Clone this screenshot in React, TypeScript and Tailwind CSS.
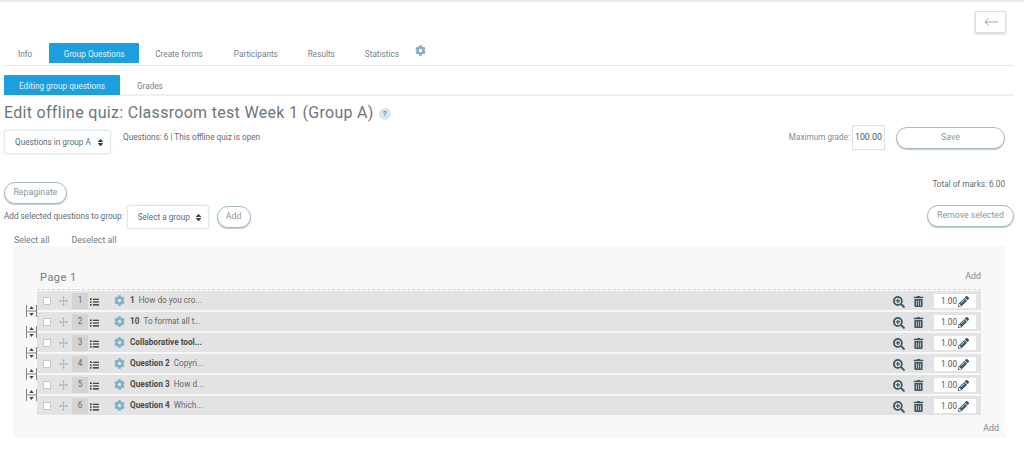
import { FaCog, FaListUl, FaPencilAlt, FaSearchPlus, FaSort, FaTrashAlt } from "react-icons/fa";

const questions = [
  { num: 1, name: "1", text: "How do you cro..." },
  { num: 2, name: "10", text: "To format all t..." },
  { num: 3, name: "Collaborative tool...", text: "" },
  { num: 4, name: "Question 2", text: "Copyri..." },
  { num: 5, name: "Question 3", text: "How d..." },
  { num: 6, name: "Question 4", text: "Which..." },
];

function MoveIcon() {
  return (
    <svg width="9" height="10" viewBox="0 0 10 10" fill="#8dbcd0" className="shrink-0" preserveAspectRatio="none">
      <path d="M4.6 1.5h.8v7h-.8zM1.5 4.6h7v.8h-7z" />
      <path d="M5 0l1.6 2H3.4zM5 10L3.4 8h3.2zM0 5l2-1.6v3.2zM10 5L8 3.4v3.2z" />
    </svg>
  );
}

function PageBreakIcon() {
  return (
    <svg width="11" height="12" viewBox="0 0 11 12" fill="none" stroke="#666" strokeWidth="0.8">
      <path d="M.5 0v12M10.5 0v12M.5 6h10" />
      <path d="M5.5 1l2.2 3H3.3zM5.5 11L3.3 8h4.4z" fill="#444" stroke="none" />
    </svg>
  );
}

function SelectBox({ label, className }: { label: string; className: string }) {
  return (
    <div className={`flex items-center justify-between rounded-[2px] border border-[#dfe8ec] bg-white text-[#5f6a72] shadow-[0_0_2px_rgba(120,150,165,0.25)] ${className}`}>
      <span>{label}</span>
      <FaSort className="h-[9px] w-[7px] text-[#3c4348]" />
    </div>
  );
}

function PillButton({ label, className }: { label: string; className: string }) {
  return (
    <button className={`rounded-full border border-[#a9bcc4] bg-white text-center text-[8.8px] text-[#8b979e] shadow-[0_1px_1px_rgba(110,140,150,0.45)] ${className}`}>
      {label}
    </button>
  );
}

function QuestionRow({ q, last }: { q: (typeof questions)[number]; last: boolean }) {
  return (
    <div className="relative flex h-[19px] items-center bg-[#e3e3e3] pl-[6px] pr-[5px]">
      <span className="h-[8px] w-[8px] shrink-0 rounded-[1px] border border-[#c4c4c4] bg-white" />
      <span className="ml-[8px]">
        <MoveIcon />
      </span>
      <span className="ml-[4px] flex h-[16px] w-[16px] shrink-0 items-center justify-center bg-[#d4d4d4] text-[#666]">{q.num}</span>
      <FaListUl className="ml-[2px] mt-[3px] h-[10px] w-[9px] shrink-0 text-[#1c1c1c]" />
      <FaCog className="ml-[15px] h-[11px] w-[11px] shrink-0 text-[#7fb0c4]" />
      <span className="ml-[5px] font-bold text-[#4a4a4a]">{q.name}</span>
      {q.text && <span className="ml-[4px] text-[#666]">{q.text}</span>}
      <div className="ml-auto mt-[2px] flex items-center">
        <FaSearchPlus className="h-[12px] w-[12px] text-[#3f5866]" />
        <FaTrashAlt className="ml-[8px] h-[11px] w-[11px] text-[#3f5866]" />
        <div className="ml-[10px] -mt-px flex h-[14px] w-[42px] items-center justify-end bg-white pr-[7px] text-[#555]">
          <span className="mr-[1px]">1.00</span>
          <FaPencilAlt className="h-[11px] w-[11px] text-[#3f5866]" />
        </div>
      </div>
      {!last && (
        <span className="absolute -left-[11px] top-[14px]">
          <PageBreakIcon />
        </span>
      )}
    </div>
  );
}

export default function App() {
  return (
    <div className="h-[450px] w-[1024px] overflow-hidden bg-white font-['Roboto',sans-serif] text-[8.2px] text-[#6a747b]">
      <div className="h-[2px] bg-[#e8ecf0]" />

      <div className="flex justify-end pr-[18px] pt-[9px]">
        <button className="flex h-[22px] w-[31px] items-center justify-center border border-[#d8e0e4] bg-white shadow-[0_1px_2px_rgba(110,130,140,0.4)]">
          <svg width="14" height="8" viewBox="0 0 14 8" fill="none" stroke="#8e9ca3" strokeWidth="0.9">
            <path d="M14 4H1M4.5.5L1 4l3.5 3.5" />
          </svg>
        </button>
      </div>

      {/* top tabs */}
      <div className="ml-[4px] mr-[10px] mt-[10px] flex h-[23px] border-b border-[#e4e7e9] text-[#757f86]">
        <span className="ml-[14px] mr-[17px] leading-[22px]">Info</span>
        <span className="h-[20px] w-[90px] rounded-t-[1px] bg-[#1b9fdd] text-center leading-[22px] text-[#e3f3fb]">Group Questions</span>
        <span className="ml-[16px] leading-[22px]">Create forms</span>
        <span className="ml-[31px] leading-[22px]">Participants</span>
        <span className="ml-[30px] leading-[22px]">Results</span>
        <span className="ml-[30px] leading-[22px]">Statistics</span>
        <FaCog className="ml-[16px] mt-[2px] h-[11px] w-[11px] text-[#7fb0c4]" />
      </div>

      {/* second tabs */}
      <div className="ml-[4px] mr-[10px] mt-[9px] flex h-[21px] border-b-2 border-[#eef0f1] text-[#757f86]">
        <span className="h-[20px] w-[116px] rounded-t-[1px] bg-[#1b9fdd] text-center leading-[22px] text-[#e3f3fb]">Editing group questions</span>
        <span className="ml-[17px] leading-[22px]">Grades</span>
      </div>

      {/* heading */}
      <div className="ml-[4px] mt-[6px] flex h-[21px] items-center">
        <h1 className="text-[16px] font-normal leading-[21px] tracking-[0.3px] text-[#6d767d]">Edit offline quiz: Classroom test Week 1 (Group A)</h1>
        <span className="ml-[5px] mt-[2px] flex h-[12px] w-[12px] items-center justify-center rounded-full bg-[#dbe6ec] text-[8px] font-bold text-[#73909e]">?</span>
      </div>

      {/* quiz info + grade */}
      <div className="mt-[2px] flex h-[30px] pl-[4px] pr-[19px]">
        <SelectBox label="Questions in group A" className="mt-[5px] h-[24px] w-[107px] pl-[10px] pr-[6px]" />
        <span className="ml-[12px] mt-[6px] leading-[12px] text-[#5f6a72]">Questions: 6 | This offline quiz is open</span>
        <span className="ml-auto mt-[6px] leading-[12px] text-[#818c93]">Maximum grade:</span>
        <span className="ml-[2px] flex h-[25px] w-[33px] items-center justify-center border border-[#d5e2e8] text-[8.8px] text-[#555]">100.00</span>
        <PillButton label="Save" className="ml-[11px] mt-[2px] h-[22px] w-[109px]" />
      </div>

      {/* repaginate + total */}
      <div className="mt-[27px] flex h-[22px] pl-[4px] pr-[19px]">
        <PillButton label="Repaginate" className="h-[22px] w-[63px]" />
        <span className="ml-auto leading-[5px] text-[#5f6a72]">Total of marks: 6.00</span>
      </div>

      {/* group actions */}
      <div className="flex h-[26px] items-center pl-[4px] pr-[10px]">
        <span className="-mt-px text-[#5f6a72]">Add selected questions to group:</span>
        <SelectBox label="Select a group" className="ml-[3px] h-[24px] w-[82px] pl-[10px] pr-[6px]" />
        <PillButton label="Add" className="ml-[8px] h-[22px] w-[34px]" />
        <PillButton label="Remove selected" className="-mt-[2px] ml-auto h-[22px] w-[87px]" />
      </div>

      <div className="ml-[14px] mt-[4px] flex h-[12px] text-[8.8px] leading-[12px] text-[#6f7a81]">
        <span>Select all</span>
        <span className="ml-[22px]">Deselect all</span>
      </div>

      {/* page panel */}
      <div className="ml-[13px] h-[192px] w-[992px] bg-[#f8f8f8] pl-[24px] pr-[24px] pt-[24px]">
        <div className="flex h-[20px] items-start border-b border-dashed border-[#d5d5d5]">
          <span className="ml-[3px] mt-px text-[11px] leading-[14px] tracking-[0.5px] text-[#747d84]">Page 1</span>
          <span className="ml-auto text-[8.8px] leading-[12px] text-[#7a848b]">Add</span>
        </div>
        <div className="mt-px flex flex-col gap-[2px]">
          {questions.map((q, i) => (
            <QuestionRow key={q.num} q={q} last={i === questions.length - 1} />
          ))}
        </div>
        <div className="mr-[-18px] mt-[7px] text-right text-[8.8px] leading-[12px] text-[#7a848b]">Add</div>
      </div>
    </div>
  );
}
